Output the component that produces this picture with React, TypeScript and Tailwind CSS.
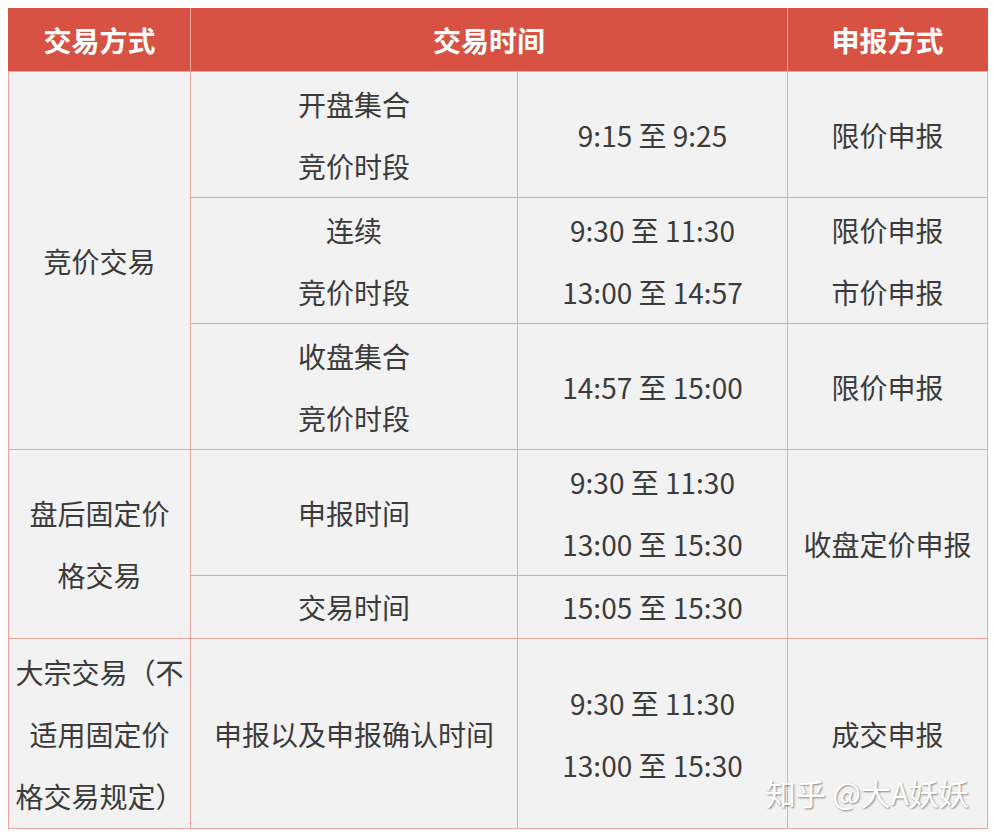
const font = '[font-family:"Noto_Sans_CJK_SC","Noto_Sans",sans-serif]';

const Lines = ({ items }: { items: string[] }) => (
  <div className="flex flex-col items-center">
    {items.map((t) => (
      <div key={t} className="leading-[62px] whitespace-nowrap">
        {t}
      </div>
    ))}
  </div>
);

const td = 'border border-[#eaa59d] text-center align-middle p-0 leading-[62px]';

export default function App() {
  return (
    <div className={`min-h-screen bg-white pt-2 pl-2 pr-[7px] ${font}`}>
      <div className="relative w-[979px]">
        <table className="w-[979px] table-fixed border-collapse bg-[#f2f2f2] text-[28px] text-[#3b3b3b]">
          <colgroup>
            <col className="w-[182px]" />
            <col className="w-[327px]" />
            <col className="w-[270px]" />
            <col className="w-[200px]" />
          </colgroup>
          <thead>
            <tr className="h-[63px] bg-[#d75242] font-bold text-white">
              <th className="border border-[#eda89f] border-t-[#d75242] border-l-[#d75242] p-0">交易方式</th>
              <th colSpan={2} className="border border-[#eda89f] border-t-[#d75242] p-0">交易时间</th>
              <th className="border border-[#eda89f] border-t-[#d75242] border-r-[#d75242] p-0">申报方式</th>
            </tr>
          </thead>
          <tbody>
            <tr className="h-[126px]">
              <td rowSpan={3} className={td}>竞价交易</td>
              <td className={td}><Lines items={['开盘集合', '竞价时段']} /></td>
              <td className={td}>9:15 至 9:25</td>
              <td className={td}>限价申报</td>
            </tr>
            <tr className="h-[126px]">
              <td className={td}><Lines items={['连续', '竞价时段']} /></td>
              <td className={td}><Lines items={['9:30 至 11:30', '13:00 至 14:57']} /></td>
              <td className={td}><Lines items={['限价申报', '市价申报']} /></td>
            </tr>
            <tr className="h-[126px]">
              <td className={td}><Lines items={['收盘集合', '竞价时段']} /></td>
              <td className={td}>14:57 至 15:00</td>
              <td className={td}>限价申报</td>
            </tr>
            <tr className="h-[126px]">
              <td rowSpan={2} className={td}><Lines items={['盘后固定价', '格交易']} /></td>
              <td className={td}>申报时间</td>
              <td className={td}><Lines items={['9:30 至 11:30', '13:00 至 15:30']} /></td>
              <td rowSpan={2} className={td}>收盘定价申报</td>
            </tr>
            <tr className="h-[63px]">
              <td className={td}>交易时间</td>
              <td className={td}>15:05 至 15:30</td>
            </tr>
            <tr className="h-[190px]">
              <td className={td}><Lines items={['大宗交易（不', '适用固定价', '格交易规定）']} /></td>
              <td className={td}>申报以及申报确认时间</td>
              <td className={td}><Lines items={['9:30 至 11:30', '13:00 至 15:30']} /></td>
              <td className={td}>成交申报</td>
            </tr>
          </tbody>
        </table>
        <div className="absolute right-[18px] bottom-[14px] text-[30px] text-white [text-shadow:1px_1px_2px_rgba(0,0,0,0.45)]">
          知乎 @大A妖妖
        </div>
      </div>
    </div>
  );
}
